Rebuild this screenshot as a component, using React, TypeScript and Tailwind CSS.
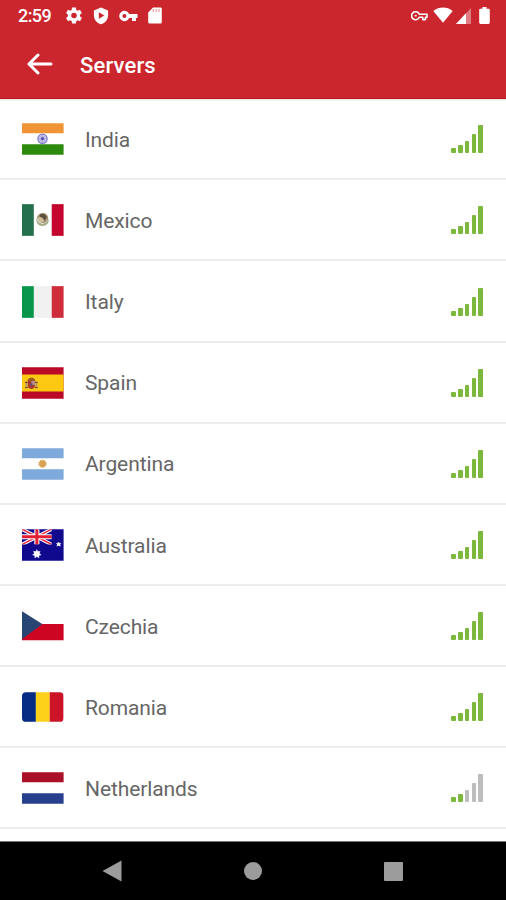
import type { ReactNode } from "react";

const cog =
  "M19.4 13c0-.3.1-.6.1-1s0-.7-.1-1l2.1-1.700c.2-.1.2-.4.1-.6l-2-3.500c-.1-.2-.4-.3-.6-.2l-2.500 1c-.5-.4-1.100-.7-1.700-1L14.400 2.400c0-.2-.2-.4-.5-.4h-4c-.2 0-.4.200-.5.400L9.100 5c-.6.300-1.200.6-1.700 1L4.900 5c-.2-.1-.5 0-.6.2l-2 3.500c-.1.200-.1.500.1.600L4.500 11c0 .3-.1.600-.1 1s0 .7.100 1l-2.100 1.700c-.2.100-.2.400-.1.600l2 3.500c.1.200.4.300.6.200l2.500-1c.5.400 1.100.7 1.700 1l.4 2.600c0 .2.200.4.500.4h4c.2 0 .4-.2.5-.4l.4-2.600c.6-.3 1.200-.6 1.700-1l2.500 1c.2.100.5 0 .6-.2l2-3.500c.1-.2.100-.5-.1-.6zM12 15.500a3.500 3.500 0 1 1 0-7 3.500 3.500 0 0 1 0 7z";

function StatusBar() {
  return (
    <div className="flex h-8 items-center pl-[18px] text-white">
      <span className="w-[48px] text-[18px] leading-[32px] font-medium tracking-[-0.6px]">2:59</span>
      <svg className="mb-[1px] h-[17px] w-[16px]" viewBox="2 2 20 20" fill="currentColor"><path d={cog} fillRule="evenodd" /></svg>
      <svg className="mb-[1px] ml-[11px] h-[18px] w-[16px]" viewBox="0 0 16 19" fill="currentColor">
        <path fillRule="evenodd" d="M8 .5 15.500 3.600v5.200c0 4.500-3.100 8.200-7.500 9.500C3.600 17 .5 13.300.5 8.800V3.600zM5.700 5.600v6.800L11.500 9z" />
      </svg>
      <svg className="mb-[1px] ml-[10px] h-[12px] w-[19px]" viewBox="0 0 19 12" fill="currentColor">
        <path fillRule="evenodd" d="M10.200 4H18.500v4H17v3h-4V8h-2.800a5.200 5.200 0 1 1 0-4zM5.400 4a2 2 0 1 0 0 4 2 2 0 0 0 0-4z" />
      </svg>
      <svg className="mb-[2px] ml-[10px] h-[17px] w-[14px]" viewBox="0 0 14 17" fill="currentColor">
        <path d="M5 .5h7.500A1.300 1.300 0 0 1 13.800 1.800v13.400a1.300 1.300 0 0 1-1.300 1.300h-11A1.300 1.300 0 0 1 .2 15.200V5.500z" />
        <path d="M5.300 2v3M8.200 2v3M11 2v3" stroke="#cb262d" strokeOpacity=".4" strokeWidth="1.400" />
      </svg>
      <svg className="mb-[1px] ml-auto h-[10px] w-[17px]" viewBox="0 0 17 10" fill="none" stroke="currentColor" strokeWidth="1.600">
        <path d="M8.300 3.200H16v3h-1.500v2.400h-2.800V6.200H8.300a4 4 0 1 1 0-3z" strokeLinejoin="round" />
        <path d="M3.800 4.700h1.800" />
      </svg>
      <svg className="mb-[2px] ml-[5px] h-[16px] w-[20px]" viewBox="0 0 20 16" fill="currentColor"><path d="M.3 4C6-.6 14-.6 19.700 4L10 15.800z" /></svg>
      <svg className="mb-[1px] ml-[3px] h-[16px] w-[15px]" viewBox="0 0 15 16" fill="currentColor">
        <path d="M0 16 15 0v16z" opacity=".4" /><path d="M0 16 10 5.300V16z" />
      </svg>
      <svg className="mr-[16px] mb-[2px] ml-[8px] h-[17px] w-[11px]" viewBox="0 0 11 17" fill="currentColor">
        <path d="M3.500 0h4v1.700h2c.8 0 1.300.5 1.300 1.200v12.700c0 .8-.5 1.400-1.300 1.400h-8C.7 17 .2 16.400.2 15.600V2.900c0-.7.5-1.200 1.300-1.200h2z" />
      </svg>
    </div>
  );
}

function Flag({ children }: { children: ReactNode }) {
  return (
    <svg className="mt-[1px] h-8 w-[42px] shrink-0" viewBox="0 0 42.400 32">
      {children}
    </svg>
  );
}

const tricolour = (a: string, b: string, c: string) => (
  <>
    <path fill={a} d="M0 0h12v32H0z" /><path fill={b} d="M12 0h18v32H12z" /><path fill={c} d="M30 0h12v32H30z" />
  </>
);
const bands = (a: string, b: string, c: string) => (
  <>
    <path fill={a} d="M0 0h42v10.500H0z" /><path fill={b} d="M0 10.500h42v10.800H0z" /><path fill={c} d="M0 21.300h42V32H0z" />
  </>
);

const servers: { name: string; level: number; flag: ReactNode }[] = [
  { name: "India", level: 5, flag: (
    <Flag>
      {bands("#f19436", "#fff", "#2c8a0d")}
      <circle cx="20.700" cy="15.800" r="4.700" fill="#c9c8ec" stroke="#7c79cb" strokeWidth="1.200" />
      <path d="M20.700 11.500v8.600M16.400 15.800H25M17.700 12.800l6 6M23.700 12.800l-6 6" stroke="#8f8dd2" strokeWidth=".6" />
      <circle cx="20.700" cy="15.800" r="1.500" fill="#4c49a8" />
    </Flag>) },
  { name: "Mexico", level: 5, flag: (
    <Flag>
      {tricolour("#24704c", "#fff", "#c4052f")}
      <path d="M14.500 14c-.8 5 2 8 6.200 8s6.800-2.800 6.300-7c-1.300 3-3.600 4.700-6.200 4.700s-5.600-2.500-6.300-5.700z" fill="#a3ae88" />
      <path d="M15 13c1.500-3.500 5.500-4.800 8.700-3.500 2.500 1.300 3.300 4 2.500 6.500-1.500 3-4.500 3.500-6.700 2.900-2.200-.8-3.800-2.700-4.500-5.900z" fill="#a99878" />
      <path d="M18 10.300c3-1.700 6.300-.3 7 3l-2 3.500-2.500-3.500-2.500.5z" fill="#5a503c" />
      <path d="M15.500 14l3.500-1 3.500 4-3.500 1.500z" fill="#cfc09a" />
    </Flag>) },
  { name: "Italy", level: 5, flag: <Flag>{tricolour("#08964a", "#f1f1f1", "#cf2c3b")}</Flag> },
  { name: "Spain", level: 5, flag: (
    <Flag>
      <path fill="#ba0a27" d="M0 0h42v32H0z" /><path fill="#fcc811" d="M0 7.500h42v17H0z" />
      <path d="M3.500 14h2v7.500h-2zM13.500 14h2v7.500h-2z" fill="#b99a61" />
      <path d="M6 12.500c1-2.500 6-2.500 7 0l.5 2H5.500z" fill="#9c5a24" />
      <path d="M6 14h7v5c0 4-7 4-7 0z" fill="#a93a32" />
      <path d="M9.500 14H13v4H9.500z" fill="#b99092" /><circle cx="9.500" cy="17.500" r="1.300" fill="#54577b" />
      <path d="M3 20.500h3M13 20.500h3M3 15.500h3M13 15.500h3" stroke="#8e4428" />
    </Flag>) },
  { name: "Argentina", level: 5, flag: (
    <Flag>
      {bands("#7eaadb", "#fff", "#7eaadb")}
      <circle cx="20.700" cy="15.800" r="3.500" fill="#d8a354" />
      <circle cx="20.700" cy="15.800" r="3.700" fill="none" stroke="#d8a354" strokeDasharray="1.200 .8" />
    </Flag>) },
  { name: "Australia", level: 5, flag: (
    <Flag>
      <path fill="#10098e" d="M0 0h42v32H0z" />
      <svg width="30" height="15.500" viewBox="0 0 30 15.500">
        <path d="M0 0l30 15.500M30 0L0 15.500" stroke="#fff" strokeWidth="3.600" />
        <path d="M0 0l30 15.500M30 0L0 15.500" stroke="#e32a3d" strokeWidth="1.500" />
        <path d="M15 0v15.500M0 7.700h30" stroke="#fff" strokeWidth="5.200" />
        <path d="M15 0v15.500M0 7.700h30" stroke="#e51d33" strokeWidth="3" />
      </svg>
      <circle cx="15" cy="25" r="2.600" fill="#fff" />
      <path d="m15 20.700 1 2.200 2.300-.6-1 2.200 2 1.400-2.400.6.100 2.500-2-1.600-2 1.600.1-2.500-2.400-.6 2-1.400-1-2.200 2.300.6z" fill="#fff" stroke="#fff" strokeWidth=".5" />
      <path d="m37 13 .7 1.300 1.600 0-1 1.300.5 1.600-1.800-.7-1.800.7.500-1.600-1-1.300h1.600z" fill="#fff" stroke="#fff" strokeWidth=".4" />
    </Flag>) },
  { name: "Czechia", level: 5, flag: (
    <Flag>
      <path fill="#cd0522" d="M0 14h42v16.500H0z" /><path fill="#294573" d="M0 1 20.500 14 0 29.500z" />
    </Flag>) },
  { name: "Romania", level: 5, flag: (
    <Flag>
      <clipPath id="round"><rect y="1" width="42" height="30" rx="4" /></clipPath>
      <g clipPath="url(#round)">
        <path fill="#062b83" d="M0 0h14v32H0z" /><path fill="#fdd119" d="M14 0h14v32H14z" /><path fill="#cc1328" d="M28 0h14v32H28z" />
      </g>
    </Flag>) },
  { name: "Netherlands", level: 2, flag: <Flag>{bands("#aa1027", "#fff", "#27408d")}</Flag> },
];

const barHeights = ["h-[5px]", "h-[8px]", "h-[12px]", "h-[19px]", "h-[28px]"];

function Signal({ level }: { level: number }) {
  return (
    <div className="mt-[1px] mr-[23px] ml-auto flex h-[28px] items-end gap-[2.2px]">
      {barHeights.map((h, i) => (
        <span key={h} className={"w-[4.6px] rounded-[1px] " + h + (i < level ? " bg-[#7cb83c]" : " bg-[#bdbdbd]")} />
      ))}
    </div>
  );
}

export default function App() {
  return (
    <div className="flex h-[900px] w-[506px] flex-col overflow-hidden bg-white font-[Roboto,sans-serif]">
      <header className="h-[99px] shrink-0 border-b border-[#b9191f] bg-[#cb262d]">
        <StatusBar />
        <div className="flex h-[66px] items-center pl-[27px] text-white">
          <svg className="mb-[3px] h-[22px] w-[26px]" viewBox="0 0 26 22" fill="none" stroke="currentColor" strokeWidth="3" strokeLinecap="round" strokeLinejoin="round">
            <path d="M24 11H2M11 2 2 11l9 9" />
          </svg>
          <h1 className="mt-[2px] ml-[27px] text-[22px] leading-[30px] font-medium tracking-[0.15px]">Servers</h1>
        </div>
      </header>
      <main className="min-h-0 flex-1 overflow-hidden bg-linear-to-b from-[#e4e0e0] to-white to-[2px] pt-[0.3px]">
        {servers.map((s) => (
          <div key={s.name} className="flex h-[81.1px] items-center border-b-2 border-[#ececec] pl-[22px]">
            {s.flag}
            <span className="mt-[2.5px] ml-[21px] text-[21px] leading-[28px] tracking-[-0.1px] text-[#666]">{s.name}</span>
            <Signal level={s.level} />
          </div>
        ))}
      </main>
      <nav className="flex h-[59px] shrink-0 items-center border-t border-[#777] bg-black pl-[102px]">
        <svg className="h-[22px] w-[20px]" viewBox="0 0 20 22"><path d="M.5 11 19.500.5v21z" fill="#9c9c9c" /></svg>
        <span className="ml-[122px] size-[18px] rounded-full bg-[#9c9c9c]" />
        <span className="ml-[122px] size-[19px] rounded-[1px] bg-[#9c9c9c]" />
      </nav>
    </div>
  );
}
